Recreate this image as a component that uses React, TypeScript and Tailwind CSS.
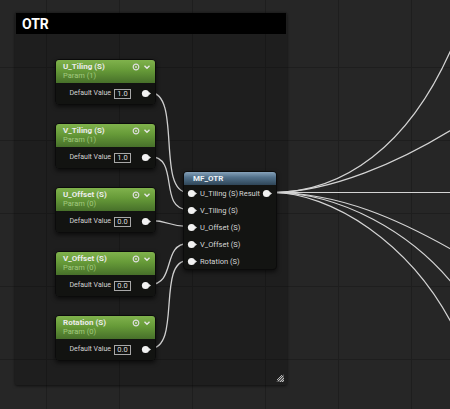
import React from 'react';

const params = [
  { title: 'U_Tiling (S)', sub: 'Param (1)', value: '1.0', pos: 'left-[55px] top-[59px]' },
  { title: 'V_Tiling (S)', sub: 'Param (1)', value: '1.0', pos: 'left-[55px] top-[123px]' },
  { title: 'U_Offset (S)', sub: 'Param (0)', value: '0.0', pos: 'left-[55px] top-[187px]' },
  { title: 'V_Offset (S)', sub: 'Param (0)', value: '0.0', pos: 'left-[55px] top-[251px]' },
  { title: 'Rotation (S)', sub: 'Param (0)', value: '0.0', pos: 'left-[55px] top-[315px]' },
];

const inputs = ['U_Tiling (S)', 'V_Tiling (S)', 'U_Offset (S)', 'V_Offset (S)', 'Rotation (S)'];

// wires from param pins into MF_OTR, then the fan out of Result
const wiresIn = [
  'M150 92.5 C 182 92.5, 156 192.5, 188 192.5',
  'M150 156.5 C 180 156.5, 158 209.5, 188 209.5',
  'M150 220.5 C 170 220.5, 168 226.5, 188 226.5',
  'M150 284.5 C 176 284.5, 162 243.5, 188 243.5',
  'M150 348.5 C 182 348.5, 156 260.5, 188 260.5',
];

const wiresOut = [
  'M272 192.5 C 340 192.5, 410 150, 456 38',
  'M272 192.5 C 330 192.5, 400 162, 456 127',
  'M272 192.5 L 452 192.5',
  'M272 192.5 C 340 192.5, 400 220, 456 252',
  'M272 192.5 C 340 192.5, 412 232, 456 288',
  'M272 192.5 C 330 192.5, 412 242, 456 332',
];

function Pin() {
  return (
    <svg width="10" height="9" viewBox="0 0 10 9" className="shrink-0">
      <circle cx="4.5" cy="4.5" r="3.6" fill="#f2f2f2" />
      <path d="M8 3 L10 4.5 L8 6 Z" fill="#e6e6e6" />
    </svg>
  );
}

function ParamNode({ title, sub, value, pos }: { title: string; sub: string; value: string; pos: string }) {
  return (
    <div className={`absolute ${pos} w-[101px] rounded-[4px] overflow-hidden border border-[#0b0b0b] shadow-[0_2px_4px_rgba(0,0,0,0.6)]`}>
      <div className="h-[23px] flex justify-between pl-[7px] pr-[4px] pt-[2px] bg-[linear-gradient(180deg,#80b24c_0%,#669a38_45%,#47702a_100%)]">
        <div className="flex flex-col">
          <span className="text-[8px] leading-[9px] font-bold text-[#ececec] whitespace-nowrap">{title}</span>
          <span className="text-[7.5px] leading-[9px] text-[#a3c97f] whitespace-nowrap">{sub}</span>
        </div>
        <div className="flex items-start gap-[3px] pt-[1px]">
          <svg width="8" height="8" viewBox="0 0 8 8">
            <circle cx="4" cy="4" r="2.8" fill="none" stroke="#dcdcdc" strokeWidth="1.2" />
            <circle cx="4" cy="4" r="0.9" fill="#dcdcdc" />
          </svg>
          <svg width="8" height="8" viewBox="0 0 8 8">
            <path d="M1.5 2.8 L4 5.3 L6.5 2.8" fill="none" stroke="#e6e6e6" strokeWidth="1.4" />
          </svg>
        </div>
      </div>
      <div className="h-[21px] flex items-center justify-end pr-[4px] bg-[#121311]">
        <span className="text-[7px] text-[#d2d2d2] whitespace-nowrap">Default Value</span>
        <span className="ml-[3px] h-[10px] w-[17px] border border-[#a8a8a8] text-[7.5px] leading-[8px] text-[#dcdcdc] flex items-center justify-center">
          {value}
        </span>
        <span className="ml-[10px]">
          <Pin />
        </span>
      </div>
    </div>
  );
}

export default function App() {
  return (
    <div className="relative w-[450px] h-[409px] overflow-hidden bg-[#262626] font-['Roboto','Liberation_Sans',sans-serif]">
      {/* background grid */}
      <svg className="absolute inset-0" width="450" height="409">
        <defs>
          <pattern id="major" x="46" y="67" width="73" height="73" patternUnits="userSpaceOnUse">
            <path d="M0 0.5 H73 M0.5 0 V73" stroke="#1e1e1e" strokeWidth="1" fill="none" />
          </pattern>
        </defs>
        <rect width="450" height="409" fill="url(#major)" />
      </svg>

      {/* comment box */}
      <div className="absolute left-[15px] top-[12px] w-[272px] h-[373px] bg-black/20 rounded-[2px] shadow-[0_1px_3px_rgba(0,0,0,0.6)] p-[1px]">
        <div className="h-[21px] bg-black flex items-center pl-[6px]">
          <span className="text-[14px] font-bold text-white leading-none">OTR</span>
        </div>
        <svg className="absolute right-[3px] bottom-[3px]" width="8" height="8" viewBox="0 0 8 8">
          <path d="M8 0 L8 8 L0 8 Z" fill="#555" />
          <path d="M7 2 L2 7 M8 4 L4 8 M8 6 L6 8 M6 1 L1 6" stroke="#d8d8d8" strokeWidth="0.8" />
        </svg>
      </div>

      {/* wires */}
      <svg className="absolute inset-0" width="450" height="409">
        {wiresIn.map((d) => (
          <path key={d} d={d} fill="none" stroke="#cfcfcf" strokeWidth="1.3" />
        ))}
        {wiresOut.map((d) => (
          <path key={d} d={d} fill="none" stroke="#d4d4d4" strokeWidth="1.2" />
        ))}
      </svg>

      {params.map((p) => (
        <ParamNode key={p.title} {...p} />
      ))}

      {/* MF_OTR function node */}
      <div className="absolute left-[183px] top-[171px] w-[94px] h-[99px] rounded-[4px] overflow-hidden border border-[#0b0b0b] bg-[#131412] shadow-[0_2px_4px_rgba(0,0,0,0.6)]">
        <div className="h-[13px] flex items-center pl-[9px] bg-[linear-gradient(180deg,#86a2ba_0%,#53728c_40%,#2f4658_100%)]">
          <span className="text-[8px] font-bold text-[#eef2f5] leading-none">MF_OTR</span>
        </div>
        <div className="flex flex-col">
          {inputs.map((label, i) => (
            <div key={label} className="h-[17px] flex items-center justify-between pl-[3px] pr-[4px]">
              <div className="flex items-center gap-[3px]">
                <Pin />
                <span className="text-[7.5px] text-[#d6d6d6] whitespace-nowrap">{label}</span>
              </div>
              {i === 0 && (
                <div className="flex items-center gap-[2px]">
                  <span className="text-[7.5px] text-[#d6d6d6] whitespace-nowrap">Result</span>
                  <Pin />
                </div>
              )}
            </div>
          ))}
        </div>
      </div>
    </div>
  );
}
